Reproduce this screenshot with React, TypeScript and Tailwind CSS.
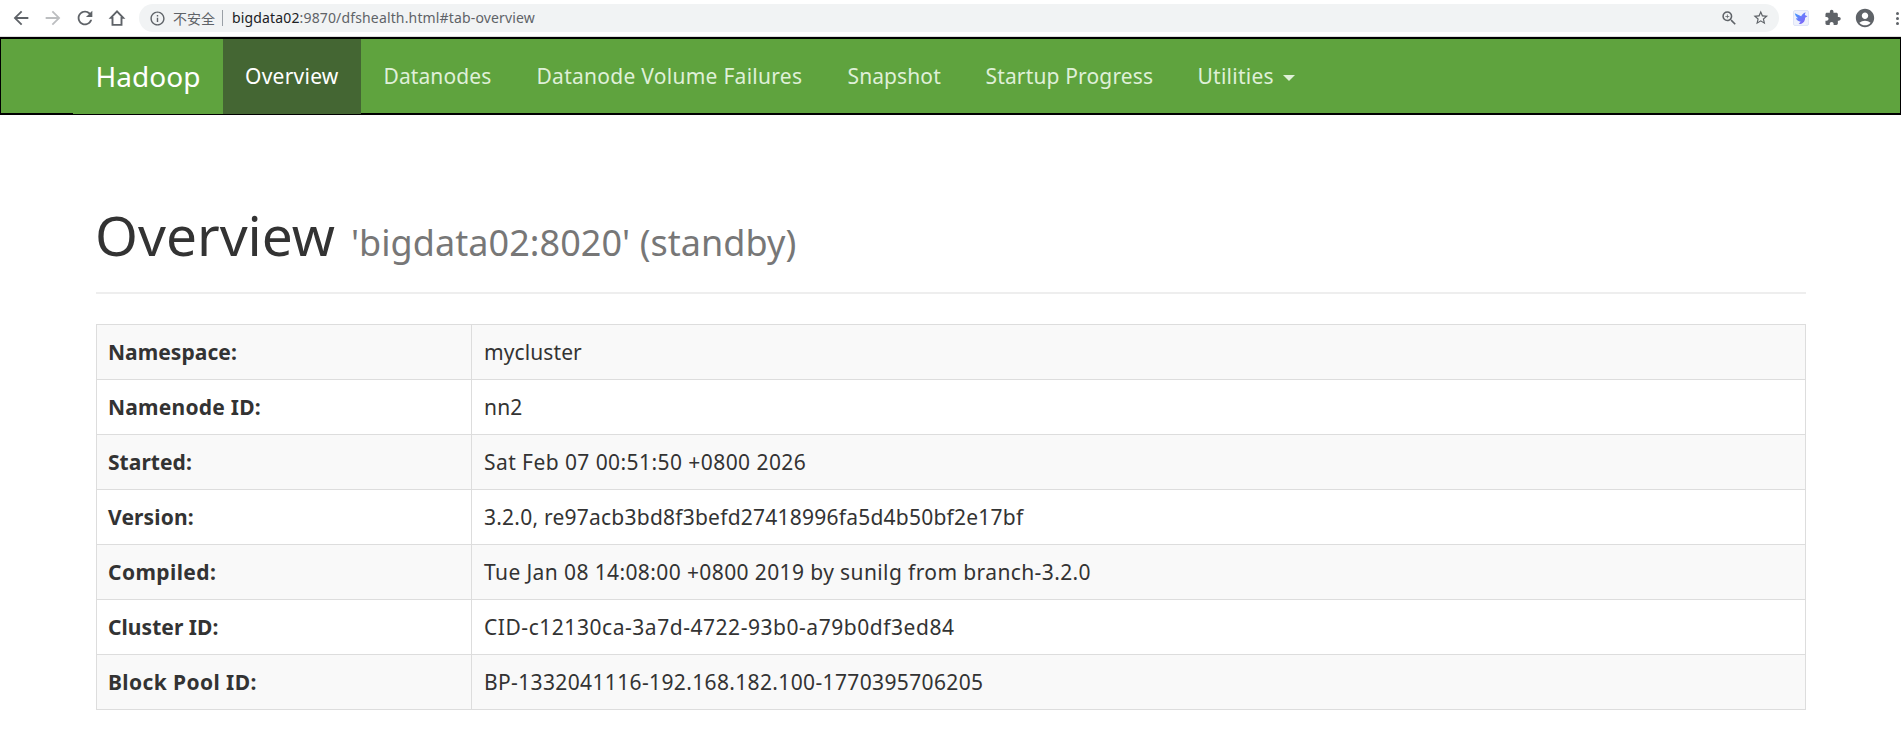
import type { ReactNode } from "react";
import {
  MdAccountCircle,
  MdExtension,
  MdInfoOutline,
  MdRefresh,
  MdStarBorder,
  MdZoomIn,
} from "react-icons/md";

const navItems = [
  { label: "Datanodes", className: "w-[153px] tracking-[0.1px]" },
  { label: "Datanode Volume Failures", className: "w-[311px] tracking-[0.27px]" },
  { label: "Snapshot", className: "w-[138px] tracking-[0.1px]" },
  { label: "Startup Progress", className: "w-[212px] tracking-[0.15px]" },
];

const rows = [
  { name: "Namespace:", nameClass: "tracking-[0.05px]", value: "mycluster", valueClass: "tracking-[0.1px]" },
  { name: "Namenode ID:", nameClass: "tracking-[0.23px]", value: "nn2", valueClass: "tracking-[0.2px]" },
  { name: "Started:", nameClass: "tracking-[0.05px]", value: "Sat Feb 07 00:51:50 +0800 2026", valueClass: "tracking-[0.43px]" },
  { name: "Version:", nameClass: "tracking-[0.15px]", value: "3.2.0, re97acb3bd8f3befd27418996fa5d4b50bf2e17bf", valueClass: "tracking-[0.23px]" },
  { name: "Compiled:", nameClass: "tracking-[0.4px]", value: "Tue Jan 08 14:08:00 +0800 2019 by sunilg from branch-3.2.0", valueClass: "tracking-[0.39px]" },
  { name: "Cluster ID:", nameClass: "tracking-[0.05px]", value: "CID-c12130ca-3a7d-4722-93b0-a79b0df3ed84", valueClass: "tracking-[0.54px]" },
  { name: "Block Pool ID:", nameClass: "tracking-[0.4px]", value: "BP-1332041116-192.168.182.100-1770395706205", valueClass: "tracking-[0.36px]" },
];

function Slot({ className, children }: { className: string; children: ReactNode }) {
  return <span className={`flex h-full shrink-0 items-center justify-center ${className}`}>{children}</span>;
}

function ArrowIcon({ className }: { className: string }) {
  return (
    <svg viewBox="0 0 24 24" className={`size-[22px] ${className}`} fill="currentColor">
      <path d="M20 11H7.83l5.59-5.59L12 4l-8 8 8 8 1.41-1.41L7.83 13H20v-2z" />
    </svg>
  );
}

function HomeIcon() {
  return (
    <svg viewBox="0 0 18 18" className="size-[18px]" fill="none" stroke="currentColor" strokeWidth="1.9">
      <path d="M9 2.4 2.8 8.9h1.7v7h9v-7h1.7z" />
    </svg>
  );
}

function BirdIcon() {
  return (
    <svg viewBox="0 0 16 16" className="size-4">
      <defs>
        <linearGradient id="wing" x1="0" y1="0" x2="1" y2="1">
          <stop offset="0" stopColor="#3fa0ff" />
          <stop offset="0.5" stopColor="#6b79fb" />
          <stop offset="1" stopColor="#8a5cf5" />
        </linearGradient>
      </defs>
      <rect x="0.5" y="0.5" width="15" height="15" rx="1.5" fill="#eef1fc" stroke="#dfe5f7" />
      <path
        d="M1.800 3.200 8.200 6.200C9 4.500 10.300 3.200 12.600 2.300L11.800 5l2.600 1.200-2.300 1.600c.2 3-1.600 5.300-4.200 6.100l-2.200-.2 2-1.900C5.300 11.400 3.500 10 2.900 8.200l2.200.1C3.300 7 2.200 5.300 1.800 3.200z"
        fill="url(#wing)"
      />
    </svg>
  );
}

function BrowserBar() {
  return (
    <header className="flex h-[37px] w-full items-start overflow-hidden border-b border-[#dddddd] bg-white pl-[5px] text-[#5f6368]">
      <div className="flex h-9 shrink-0 items-center">
        <Slot className="w-8"><ArrowIcon className="" /></Slot>
        <Slot className="w-8"><ArrowIcon className="rotate-180 text-[#bcbec0]" /></Slot>
        <Slot className="w-8"><MdRefresh className="size-[22px]" /></Slot>
        <Slot className="w-8"><HomeIcon /></Slot>
      </div>
      <div className="ml-[6px] mt-1 flex h-7 w-[1640px] shrink-0 items-center rounded-full bg-[#f1f3f4]">
        <Slot className="ml-[9px] w-[18px]"><MdInfoOutline className="size-[17px]" /></Slot>
        <span className="ml-[7px] w-[42px] whitespace-nowrap font-['Noto_Sans_CJK_SC',sans-serif] text-[14px] leading-5">不安全</span>
        <span className="ml-[7px] h-4 w-px bg-[#9aa0a6]" />
        <span className="ml-[9px] flex-1 whitespace-nowrap text-[14px] leading-5 tracking-[0.15px]">
          <span className="text-[#202124]">bigdata02</span>:9870/dfshealth.html#tab-overview
        </span>
        <Slot className="w-8"><MdZoomIn className="size-[18.5px]" /></Slot>
        <Slot className="mr-[2px] w-8"><MdStarBorder className="size-[17.5px]" /></Slot>
      </div>
      <div className="flex h-9 shrink-0 items-center">
        <Slot className="ml-[6px] w-8"><BirdIcon /></Slot>
        <Slot className="w-8"><MdExtension className="size-[17.5px]" /></Slot>
        <Slot className="w-8"><MdAccountCircle className="size-[22px]" /></Slot>
        <span className="ml-[15px] flex flex-col gap-[2px]">
          <i className="size-[3px] rounded-full bg-[#5f6368]" />
          <i className="size-[3px] rounded-full bg-[#5f6368]" />
          <i className="size-[3px] rounded-full bg-[#5f6368]" />
        </span>
      </div>
    </header>
  );
}

function NavBar() {
  return (
    <nav className="flex h-[78px] w-full items-start border-x border-y-2 border-black bg-[#5fa33e] pl-[72px] text-[21px] leading-[30px] text-[#dff0d8]">
      <a className="flex h-[75px] w-[150px] shrink-0 items-center bg-[#5fa33e] pb-[2px] pl-[22.5px] text-[28px] tracking-[0.05px] text-white">Hadoop</a>
      <a className="flex h-[75px] w-[138px] shrink-0 items-center bg-[#446633] pb-[2px] pl-[22px] tracking-[0.25px] text-white">Overview</a>
      {navItems.map((item) => (
        <a key={item.label} className={`flex h-[74px] shrink-0 items-center whitespace-nowrap pb-px pl-[22.5px] ${item.className}`}>
          {item.label}
        </a>
      ))}
      <a className="flex h-[74px] shrink-0 items-center pb-px pl-[22.5px] tracking-[0.25px]">
        Utilities
        <span className="ml-[9px] mt-[4px] border-x-[6px] border-t-[6px] border-x-transparent border-t-[#dff0d8]" />
      </a>
    </nav>
  );
}

export default function App() {
  return (
    <div className="min-h-[749px] w-full bg-white font-['Noto_Sans','Noto_Sans_CJK_SC',sans-serif] text-[#333333]">
      <BrowserBar />
      <NavBar />
      <main className="w-[1806px] pl-24 pt-[90px]">
        <h1 className="flex h-[89px] items-baseline whitespace-nowrap border-b-2 border-[#eeeeee] text-[55px] font-normal leading-[59px]">
          <span className="-ml-px">Overview</span>
          <small className="ml-[16px] text-[36px] leading-[36px] tracking-[0.05px] text-[#777777]">'bigdata02:8020' (standby)</small>
        </h1>
        <table className="mt-[30px] w-full table-fixed border-collapse text-[21px] leading-[30px]">
          <colgroup>
            <col className="w-[375px]" />
            <col />
          </colgroup>
          <tbody>
            {rows.map((row) => (
              <tr key={row.name} className="h-[55px] odd:bg-[#f9f9f9]">
                <th className={`border border-[#dddddd] py-0 pl-[11px] pr-3 text-left align-middle font-bold ${row.nameClass}`}>{row.name}</th>
                <td className={`border border-[#dddddd] px-3 py-0 align-middle ${row.valueClass}`}>{row.value}</td>
              </tr>
            ))}
          </tbody>
        </table>
      </main>
    </div>
  );
}
